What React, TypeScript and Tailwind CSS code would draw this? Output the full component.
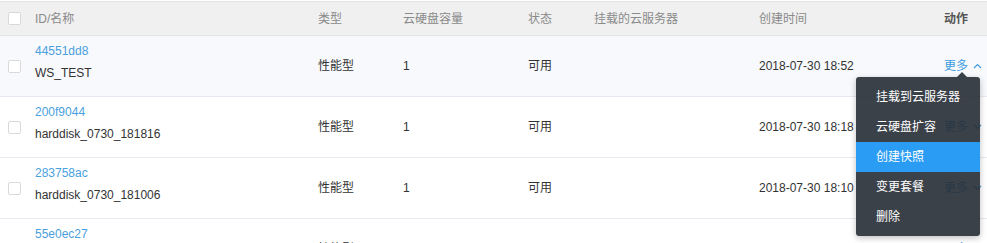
import React from "react";

type Row = { id: string; name: string; time: string; open?: boolean; hover?: boolean };

const rows: Row[] = [
  { id: "44551dd8", name: "WS_TEST", time: "2018-07-30 18:52", open: true, hover: true },
  { id: "200f9044", name: "harddisk_0730_181816", time: "2018-07-30 18:18" },
  { id: "283758ac", name: "harddisk_0730_181006", time: "2018-07-30 18:10" },
  { id: "55e0ec27", name: "harddisk_0730_180512", time: "2018-07-30 18:05" },
];

const Checkbox = () => (
  <div className="w-[13px] h-[13px] border border-[#d9d9d9] bg-white rounded-[2px]" />
);

const Chevron = ({ up }: { up?: boolean }) => (
  <svg width="9" height="6" viewBox="0 0 9 6" className="ml-[5px]">
    <polyline
      points={up ? "1,5 4.5,1.5 8,5" : "1,1 4.5,4.5 8,1"}
      fill="none"
      stroke="#3d9be0"
      strokeWidth="1.1"
    />
  </svg>
);

const menu = ["挂载到云服务器", "云硬盘扩容", "创建快照", "变更套餐", "删除"];

export default function App() {
  return (
    <div
      className="relative w-[987px] pt-[1px] bg-white text-[12px] text-[#333]"
      style={{ fontFamily: '"Liberation Sans", Arial, "Noto Sans CJK SC", sans-serif' }}
    >
      {/* header */}
      <div className="flex h-[35px] items-center bg-[#f0f0f0] border-t border-b border-[#e4e4e4] text-[#8a8a8a]">
        <div className="w-[35px] pl-[8px] flex items-center">
          <Checkbox />
        </div>
        <div className="w-[283px]">ID/名称</div>
        <div className="w-[85px]">类型</div>
        <div className="w-[125px]">云硬盘容量</div>
        <div className="w-[66px]">状态</div>
        <div className="w-[165px]">挂载的云服务器</div>
        <div className="w-[168px]">创建时间</div>
        <div className="w-[60px] pr-[19px] text-right font-bold text-[#555]">动作</div>
      </div>

      {rows.map((r) => (
        <div
          key={r.id}
          className={`flex h-[61px] items-center border-b border-[#e6e9ef] ${r.hover ? "bg-[#f7f9fc]" : "bg-white"}`}
        >
          <div className="w-[35px] pl-[8px] flex items-center">
            <Checkbox />
          </div>
          <div className="w-[283px] flex flex-col -mt-2 leading-[22px]">
            <span className="text-[#4a9fde]">{r.id}</span>
            <span>{r.name}</span>
          </div>
          <div className="w-[85px]">性能型</div>
          <div className="w-[125px]">1</div>
          <div className="w-[66px]">可用</div>
          <div className="w-[165px]"></div>
          <div className="w-[168px]">{r.time}</div>
          <div className="w-[60px] pl-[17px] flex items-center text-[#3d9be0]">
            <span>更多</span>
            <Chevron up={r.open} />
          </div>
        </div>
      ))}

      {/* dropdown menu */}
      <div className="absolute left-[856px] top-[77px] w-[124px] pt-[5px] pb-[4px] rounded-[3px] bg-[rgba(38,44,53,0.9)] shadow-[0_2px_6px_rgba(0,0,0,0.25)]">
        <div className="absolute -top-[5px] left-[101px] w-0 h-0 border-l-[5px] border-r-[5px] border-b-[5px] border-l-transparent border-r-transparent border-b-[rgba(38,44,53,0.9)]" />
        {menu.map((m) => (
          <div
            key={m}
            className={`h-[30px] flex items-center pl-[20px] text-white ${m === "创建快照" ? "bg-[#2b9cf4]" : ""}`}
          >
            {m}
          </div>
        ))}
      </div>
    </div>
  );
}
